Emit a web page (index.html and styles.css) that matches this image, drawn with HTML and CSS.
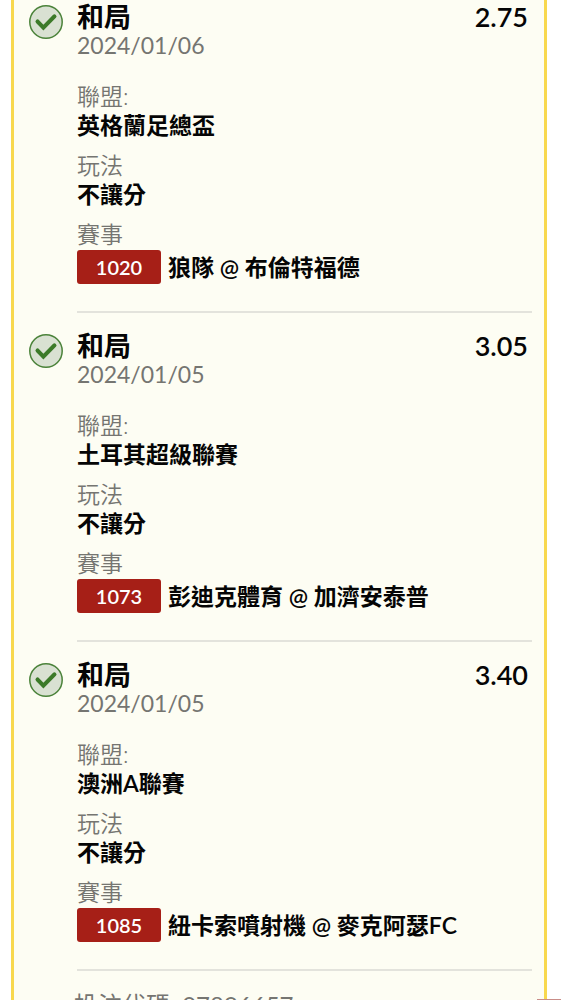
FILE: index.html
```html
<!DOCTYPE html>
<html lang="zh-Hant">
<head>
    <meta charset="UTF-8">
    <meta name="viewport" content="width=device-width, initial-scale=1.0">
    <title>投注紀錄</title>
    <link rel="stylesheet" href="styles.css">
</head>
<body>
    <svg class="sprite" aria-hidden="true">
        <symbol id="check" viewBox="0 0 34 34">
            <circle cx="17" cy="17" r="16.2" fill="#d9e1d2" stroke="#4a8239" stroke-width="1.5"/>
            <path d="M8.6 16.6 14.4 22.6 25.4 11.4" fill="none" stroke="#3c7a29" stroke-width="4.2" stroke-linecap="round"/>
        </symbol>
    </svg>
    <main class="ticket">
        <article class="bet">
            <svg class="status" role="img" aria-label="贏"><use href="#check"/></svg>
            <div class="detail">
                <header class="bet-head">
                    <h2>和局</h2>
                    <span class="odds">2.75</span>
                </header>
                <time class="date" datetime="2024-01-06">2024/01/06</time>
                <dl class="info">
                    <div><dt>聯盟:</dt><dd>英格蘭足總盃</dd></div>
                    <div><dt>玩法</dt><dd>不讓分</dd></div>
                    <div><dt>賽事</dt><dd class="match"><span class="code">1020</span>狼隊 @ 布倫特福德</dd></div>
                </dl>
            </div>
        </article>
        <article class="bet">
            <svg class="status" role="img" aria-label="贏"><use href="#check"/></svg>
            <div class="detail">
                <header class="bet-head">
                    <h2>和局</h2>
                    <span class="odds">3.05</span>
                </header>
                <time class="date" datetime="2024-01-05">2024/01/05</time>
                <dl class="info">
                    <div><dt>聯盟:</dt><dd>土耳其超級聯賽</dd></div>
                    <div><dt>玩法</dt><dd>不讓分</dd></div>
                    <div><dt>賽事</dt><dd class="match"><span class="code">1073</span>彭迪克體育 @ 加濟安泰普</dd></div>
                </dl>
            </div>
        </article>
        <article class="bet">
            <svg class="status" role="img" aria-label="贏"><use href="#check"/></svg>
            <div class="detail">
                <header class="bet-head">
                    <h2>和局</h2>
                    <span class="odds">3.40</span>
                </header>
                <time class="date" datetime="2024-01-05">2024/01/05</time>
                <dl class="info">
                    <div><dt>聯盟:</dt><dd>澳洲A聯賽</dd></div>
                    <div><dt>玩法</dt><dd>不讓分</dd></div>
                    <div><dt>賽事</dt><dd class="match"><span class="code">1085</span>紐卡索噴射機 @ 麥克阿瑟FC</dd></div>
                </dl>
            </div>
        </article>
        <footer class="ticket-code">投注代碼: 07896657</footer>
    </main>
    <div class="edge"></div>
</body>
</html>
```
FILE: styles.css
```css
* {
    box-sizing: border-box;
}
html {
    height: 100%;
    overflow: hidden;
}
body {
    height: 100%;
    margin: 0;
    overflow: hidden;
    background-color: #fff;
    color: #050505;
    font-family: Lato, "Noto Sans CJK TC", sans-serif;
}
h2, dl, dd {
    margin: 0;
}
.sprite {
    display: none;
}
.ticket {
    margin: 0 14px 0 11px;
    padding: 3px 12px 0 15px;
    border: 3px solid #f8d84e;
    border-top: 0;
    border-bottom: 0;
    background-color: #fdfdf3;
}
.bet {
    display: flex;
    gap: 14px;
    margin-bottom: 19px;
}
.status {
    flex: none;
    width: 34px;
    height: 34px;
    margin-top: 2px;
}
.detail {
    flex: 1;
    padding-bottom: 27px;
    border-bottom: 2px solid #e3e3dc;
}
.bet-head {
    display: flex;
    justify-content: space-between;
    padding-right: 4px;
    line-height: 28px;
}
.bet-head h2, .odds {
    font-size: 27px;
    font-weight: 600;
}
.date {
    display: block;
    color: #757571;
    font-size: 23px;
    line-height: 28px;
}
.info {
    display: flex;
    flex-direction: column;
    gap: 11px;
    margin-top: 23px;
    font-size: 23px;
    line-height: 29px;
}
.info dt {
    color: #757571;
    font-weight: 350;
}
.info dd {
    font-weight: 600;
}
.info .match {
    display: flex;
    align-items: center;
    gap: 7px;
    margin-top: 1px;
    line-height: 34px;
}
.code {
    width: 84px;
    border-radius: 3px;
    background-color: #a61f17;
    color: #fff;
    font-size: 20px;
    text-align: center;
}
.ticket-code {
    padding-left: 45px;
    color: #757571;
    font-size: 24px;
    line-height: 29px;
}
.edge {
    position: fixed;
    right: 0;
    bottom: 0;
    width: 24px;
    height: 1px;
    background-color: #c98d88;
}
```
